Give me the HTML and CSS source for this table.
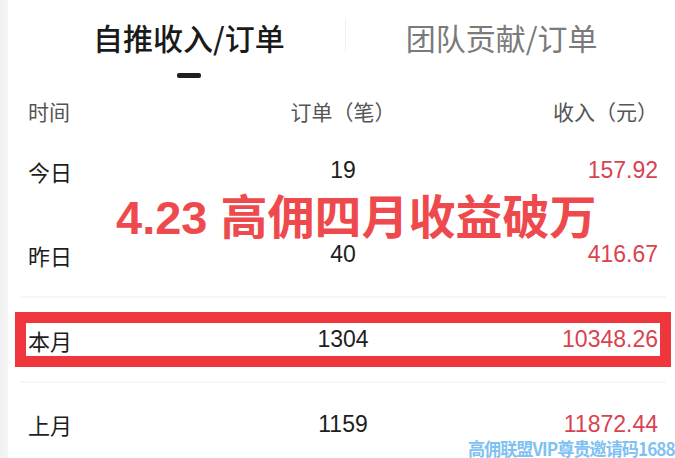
FILE: index.html
```html
<!DOCTYPE html>
<html lang="zh">
<head>
<meta charset="utf-8">
<link rel="stylesheet" href="styles.css">
</head>
<body>
<div class="page">
  <div class="edge"></div>
  <div class="panel">
    <div class="tabs">
      <div class="tab active">自推收入/订单<span class="indicator"></span></div>
      <div class="divider"></div>
      <div class="tab">团队贡献/订单</div>
    </div>
    <div class="row head">
      <span class="c1">时间</span>
      <span class="c2">订单（笔）</span>
      <span class="c3">收入（元）</span>
    </div>
    <div class="row">
      <span class="c1">今日</span>
      <span class="c2 num">19</span>
      <span class="c3 num money">157.92</span>
    </div>
    <div class="row line">
      <span class="c1">昨日</span>
      <span class="c2 num">40</span>
      <span class="c3 num money">416.67</span>
    </div>
    <div class="row line marked">
      <span class="c1">本月</span>
      <span class="c2 num">1304</span>
      <span class="c3 num money">10348.26</span>
    </div>
    <div class="row last">
      <span class="c1">上月</span>
      <span class="c2 num">1159</span>
      <span class="c3 num money">11872.44</span>
    </div>
  </div>
  <div class="headline">4.23 高佣四月收益破万</div>
  <div class="watermark">高佣联盟VIP尊贵邀请码1688</div>
</div>
</body>
</html>
```

FILE: styles.css
```css
html, body {
  margin: 0;
  padding: 0;
  background: #ffffff;
}
body {
  width: 675px;
  height: 458px;
  overflow: hidden;
  font-family: "Liberation Sans", "Noto Sans CJK SC", sans-serif;
  color: #1e1e1e;
}
.page {
  position: relative;
  display: flex;
  width: 675px;
  height: 458px;
  overflow: hidden;
}
.edge {
  width: 8px;
  flex: none;
  background: linear-gradient(to right, #f1f1f1, #f6f6f6);
}
.panel {
  flex: 1;
  display: flex;
  flex-direction: column;
}
.tabs {
  flex: none;
  box-sizing: border-box;
  display: flex;
  align-items: flex-start;
  padding: 18px 0 0 85px;
  height: 94px;
}
.tab {
  position: relative;
  font-family: "Noto Sans CJK SC", sans-serif;
  font-size: 30px;
  line-height: 38px;
  color: #7a7a7a;
}
.tab.active {
  color: #1a1a1a;
  font-weight: 500;
}
.indicator {
  position: absolute;
  left: 50%;
  top: 55px;
  width: 24px;
  height: 5px;
  margin-left: -12px;
  border-radius: 2px;
  background: #1f1f1f;
}
.divider {
  width: 1px;
  height: 34px;
  margin: 0 60px 0 60px;
  background: #f1f1f1;
}
.row {
  flex: none;
  box-sizing: border-box;
  display: grid;
  grid-template-columns: 1fr 1fr 1fr;
  align-items: center;
  margin: 0 9px 0 12px;
  padding: 0 8px;
  height: 85px;
  font-size: 22px;
  position: relative;
}
.row.head {
  height: 34px;
  font-size: 21px;
  color: #555;
}
.row.head span {
  font-family: "Noto Sans CJK SC", sans-serif;
}
.row.last {
  padding-bottom: 3px;
}
.row .c1 {
  font-family: "Noto Sans CJK SC", sans-serif;
}
.c2 { text-align: center; }
.c3 { text-align: right; }
.num {
  font-family: "Liberation Sans", sans-serif;
  font-size: 23px;
}
.money {
  color: #d9434f;
}
.row.line {
  border-bottom: 2px solid #f7f7f7;
}
.row.marked::before {
  content: "";
  position: absolute;
  left: -5px;
  right: -5px;
  top: 14px;
  bottom: 14px;
  border: 11px solid #ef363c;
}
.headline {
  position: absolute;
  left: 116px;
  top: 190px;
  font-family: "Liberation Sans", "Noto Sans CJK SC", sans-serif;
  font-weight: 700;
  font-size: 47px;
  line-height: 56px;
  color: #ee4a4e;
  white-space: nowrap;
}
.watermark {
  position: absolute;
  right: 0;
  bottom: 0;
  font-family: "Noto Sans CJK SC", sans-serif;
  font-weight: 700;
  font-size: 18px;
  line-height: 20px;
  color: #7fc2f2;
  letter-spacing: -1px;
  transform: scaleX(0.95);
  transform-origin: right bottom;
  white-space: nowrap;
}
```
